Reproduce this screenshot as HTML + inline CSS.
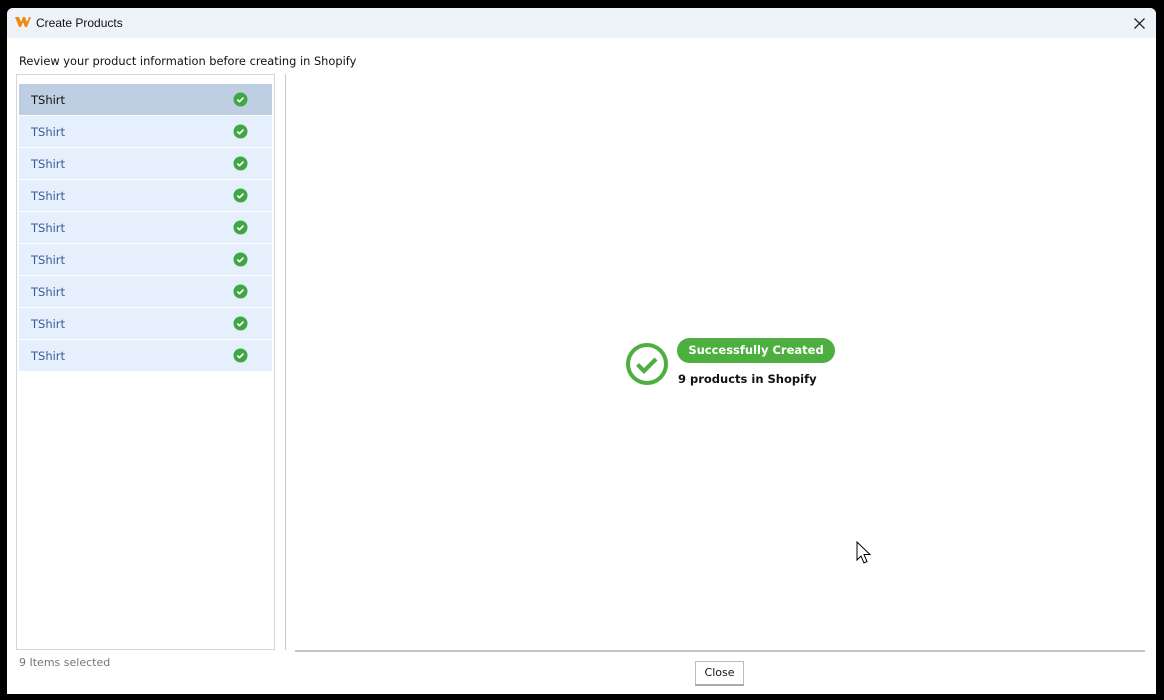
<!DOCTYPE html>
<html><head><style>
html,body{margin:0;padding:0;width:1164px;height:700px;background:#000;overflow:hidden;font-family:"DejaVu Sans","Liberation Sans",sans-serif;}
.dlg{position:absolute;left:7px;top:8px;width:1149px;height:686px;background:#fff;border-radius:6px 6px 0 0;overflow:hidden}
.title{position:absolute;left:0;top:0;right:0;height:30px;background:#eef2f9}
.title .t{position:absolute;left:29px;top:8px;font-size:12px;color:#111;font-family:"Liberation Sans",sans-serif}
.sub{position:absolute;left:12px;top:46px;font-size:11.4px;color:#111}
.list{position:absolute;left:9px;top:66px;width:257px;height:574px;border:1px solid #d6d6d6}
.row{position:absolute;left:2px;width:253px;height:31px;background:#e6effc;font-size:11.5px;color:#3c5a99}
.row span{position:absolute;left:12px;top:9px}
.row svg{position:absolute;left:214px;top:8px}
.row.sel{background:#bfcfe3;color:#111}
.vsep{position:absolute;left:278px;top:66px;width:1px;height:576px;background:#c8c8c8}
.hsep{position:absolute;left:288px;top:642px;width:850px;height:2px;background:#c4c4c4}
.foot{position:absolute;left:12px;top:648px;font-size:11px;color:#777}
.btn{position:absolute;left:688px;top:653px;width:47px;height:22px;border:1px solid #bbb;border-bottom:2px solid #aaa;background:#fff;font-size:11px;text-align:center;line-height:22px;color:#111}
.pill{position:absolute;left:670px;top:330px;width:158px;height:25px;border-radius:13px;background:#4caf3f;color:#fff;font-weight:bold;font-size:11.5px;text-align:center;line-height:25px}
.cnt{position:absolute;left:671px;top:364px;font-weight:bold;font-size:11.5px;color:#111}
</style></head><body>
<div class="dlg">
 <div class="title">
  <svg style="position:absolute;left:8px;top:8px" width="16" height="12" viewBox="0 0 16 12"><path d="M0 1h4l2 5 2-5h2l2 5 2-5h2l-4 10h-2l-2-5-2 5h-2z" fill="#f08a12"/></svg>
  <div class="t">Create Products</div>
  <svg style="position:absolute;left:1127px;top:10px" width="11" height="11" viewBox="0 0 11 11"><path d="M0.5 0.5L10.5 10.5M10.5 0.5L0.5 10.5" stroke="#222" stroke-width="1.3"/></svg>
 </div>
 <div class="sub">Review your product information before creating in Shopify</div>
 <div class="list">
  <div class="row sel" style="top:9px"><span>TShirt</span><svg width="15" height="15"><circle cx="7.5" cy="7.5" r="7" fill="#3fa845"/><path d="M4.3 7.6l2.2 2 4-4" stroke="#fff" stroke-width="1.6" fill="none"/></svg></div>
  <div class="row" style="top:41px"><span>TShirt</span><svg width="15" height="15"><circle cx="7.5" cy="7.5" r="7" fill="#3fa845"/><path d="M4.3 7.6l2.2 2 4-4" stroke="#fff" stroke-width="1.6" fill="none"/></svg></div>
  <div class="row" style="top:73px"><span>TShirt</span><svg width="15" height="15"><circle cx="7.5" cy="7.5" r="7" fill="#3fa845"/><path d="M4.3 7.6l2.2 2 4-4" stroke="#fff" stroke-width="1.6" fill="none"/></svg></div>
  <div class="row" style="top:105px"><span>TShirt</span><svg width="15" height="15"><circle cx="7.5" cy="7.5" r="7" fill="#3fa845"/><path d="M4.3 7.6l2.2 2 4-4" stroke="#fff" stroke-width="1.6" fill="none"/></svg></div>
  <div class="row" style="top:137px"><span>TShirt</span><svg width="15" height="15"><circle cx="7.5" cy="7.5" r="7" fill="#3fa845"/><path d="M4.3 7.6l2.2 2 4-4" stroke="#fff" stroke-width="1.6" fill="none"/></svg></div>
  <div class="row" style="top:169px"><span>TShirt</span><svg width="15" height="15"><circle cx="7.5" cy="7.5" r="7" fill="#3fa845"/><path d="M4.3 7.6l2.2 2 4-4" stroke="#fff" stroke-width="1.6" fill="none"/></svg></div>
  <div class="row" style="top:201px"><span>TShirt</span><svg width="15" height="15"><circle cx="7.5" cy="7.5" r="7" fill="#3fa845"/><path d="M4.3 7.6l2.2 2 4-4" stroke="#fff" stroke-width="1.6" fill="none"/></svg></div>
  <div class="row" style="top:233px"><span>TShirt</span><svg width="15" height="15"><circle cx="7.5" cy="7.5" r="7" fill="#3fa845"/><path d="M4.3 7.6l2.2 2 4-4" stroke="#fff" stroke-width="1.6" fill="none"/></svg></div>
  <div class="row" style="top:265px"><span>TShirt</span><svg width="15" height="15"><circle cx="7.5" cy="7.5" r="7" fill="#3fa845"/><path d="M4.3 7.6l2.2 2 4-4" stroke="#fff" stroke-width="1.6" fill="none"/></svg></div>
 </div>
 <div class="vsep"></div>
 <svg style="position:absolute;left:618px;top:334px" width="44" height="44" viewBox="0 0 44 44"><circle cx="22" cy="22" r="19" fill="none" stroke="#4caf3f" stroke-width="4"/><path d="M12.5 22.5l6.5 6.5 12-12" fill="none" stroke="#4caf3f" stroke-width="4.2"/></svg>
 <div class="pill">Successfully Created</div>
 <div class="cnt">9 products in Shopify</div>
 <svg style="position:absolute;left:849px;top:533px" width="16" height="24" viewBox="0 0 16 24"><path d="M1 1v18l4-4 3 7 3-1.5-3-7h6z" fill="#fff" stroke="#000" stroke-width="1"/></svg>
 <div class="hsep"></div>
 <div class="foot">9 Items selected</div>
 <div class="btn">Close</div>
</div>
</body></html>
